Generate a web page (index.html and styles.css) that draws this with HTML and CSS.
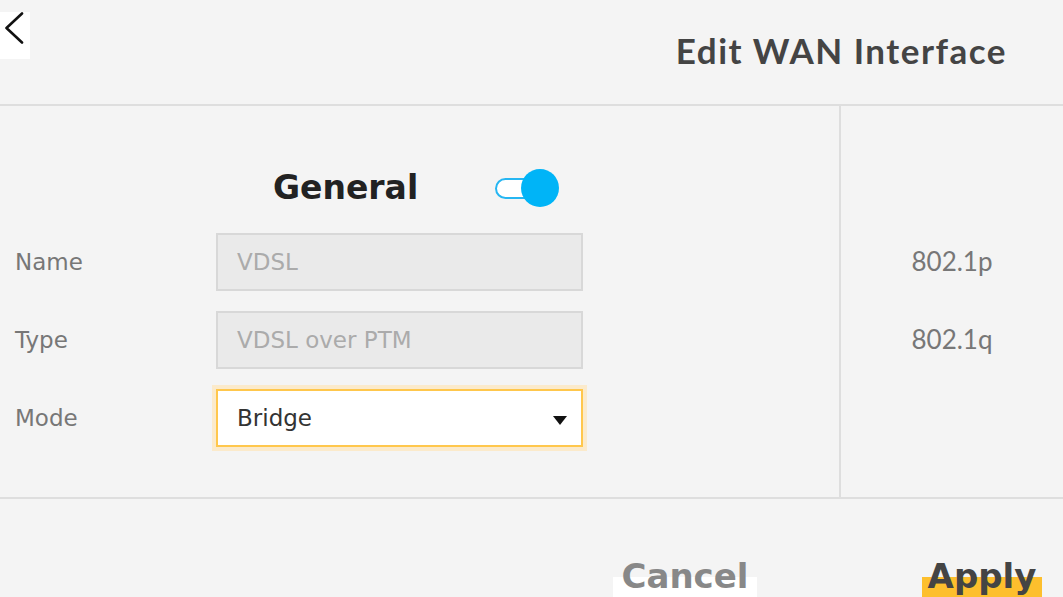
FILE: index.html
```html
<!DOCTYPE html>
<html>
<head>
<meta charset="utf-8">
<link rel="stylesheet" href="styles.css">
</head>
<body>
<div class="page">
  <header class="header">
    <button class="back" aria-label="Back">
      <svg width="30" height="47" viewBox="0 0 30 47"><path d="M22 1.5 L6.5 16 L22 30.5" fill="none" stroke="#111" stroke-width="2.6" stroke-linecap="round" stroke-linejoin="round"/></svg>
    </button>
    <h1 class="title">Edit WAN Interface</h1>
  </header>
  <main class="body">
    <section class="left">
      <div class="general-row">
        <h2 class="general">General</h2>
        <span class="toggle"><span class="track"></span><span class="knob"></span></span>
      </div>
      <div class="form">
        <label class="lbl">Name</label>
        <div class="field disabled">VDSL</div>
        <label class="lbl">Type</label>
        <div class="field disabled">VDSL over PTM</div>
        <label class="lbl">Mode</label>
        <div class="field select">Bridge<span class="caret"></span></div>
      </div>
    </section>
    <section class="right">
      <div class="rv">802.1p</div>
      <div class="rv">802.1q</div>
    </section>
  </main>
  <footer class="footer">
    <button class="btn cancel">Cancel</button>
    <button class="btn apply">Apply</button>
  </footer>
</div>
</body>
</html>
```

FILE: styles.css
```css
html, body { margin: 0; padding: 0; }
body {
  background: #f4f4f4;
  font-family: "DejaVu Sans", sans-serif;
  width: 1063px; height: 597px; overflow: hidden;
}
.page { display: flex; flex-direction: column; height: 597px; }
.header {
  flex-shrink: 0;
  height: 104px; border-bottom: 2px solid #dedede;
  display: flex; justify-content: space-between; align-items: flex-start;
}
.back {
  margin-top: 12px; width: 30px; height: 47px; padding: 0; border: 0;
  background: #fff; display: block;
}
.back svg { display: block; }
.title {
  margin: 28px 56px 0 0; font-family: "Lato", sans-serif;
  font-size: 35px; font-weight: 700; color: #444;
  letter-spacing: 1.5px; line-height: 44px;
}
.body { flex-shrink: 0; display: flex; height: 391px; border-bottom: 2px solid #dedede; }
.left { width: 839px; border-right: 2px solid #dedede; }
.general-row { display: flex; align-items: center; padding: 62px 0 0 273px; height: 40px; }
.general { margin: 0; font-size: 33px; font-weight: 700; color: #222; line-height: 40px; }
.toggle { position: relative; margin-left: 77px; width: 64px; height: 40px; }
.track {
  position: absolute; left: 0; top: 10px; width: 44px; height: 21px;
  border: 2px solid #26b6f2; border-radius: 12px; background: #fff; box-sizing: border-box;
}
.knob {
  position: absolute; left: 26px; top: 1px; width: 38px; height: 38px;
  border-radius: 50%; background: #00b4f7;
}
.form {
  display: grid; grid-template-columns: 201px 367px; row-gap: 20px;
  padding: 25px 0 0 15px; align-items: center;
}
.lbl { font-size: 23px; color: #777; }
.field {
  height: 58px; box-sizing: border-box; display: flex; align-items: center;
  padding-left: 19px; font-size: 23px;
}
.disabled { background: #eaeaea; border: 2px solid #d8d8d8; color: #ababab; }
.select {
  background: #fff; border: 2px solid #ffc74c; color: #333;
  box-shadow: 0 0 0 4px #fbeacb; position: relative;
}
.caret {
  position: absolute; right: 14px; top: 25px; width: 0; height: 0;
  border-left: 7px solid transparent; border-right: 7px solid transparent; border-top: 9px solid #111;
}
.right { flex: 1; display: flex; flex-direction: column; align-items: center; padding-top: 140px; }
.rv { font-family: "Lato", sans-serif; font-size: 26px; color: #777; height: 78px; line-height: 30px; }
.footer { flex: 1; display: flex; justify-content: flex-end; align-items: flex-start; overflow: hidden; }
.btn {
  border: 0; padding: 0; font-family: "DejaVu Sans", sans-serif; font-size: 34px; font-weight: 700;
  margin-top: 47px; line-height: 40px; height: 60px; flex-shrink: 0;
  background-repeat: no-repeat; background-position: 0 31px;
}
.cancel {
  color: #888; width: 144px; margin-right: 165px;
  background-color: transparent; background-image: linear-gradient(#fff, #fff);
}
.apply {
  color: #444; width: 120px; margin-right: 21px;
  background-color: transparent; background-image: linear-gradient(#fdbf2d, #fdbf2d);
}
```
